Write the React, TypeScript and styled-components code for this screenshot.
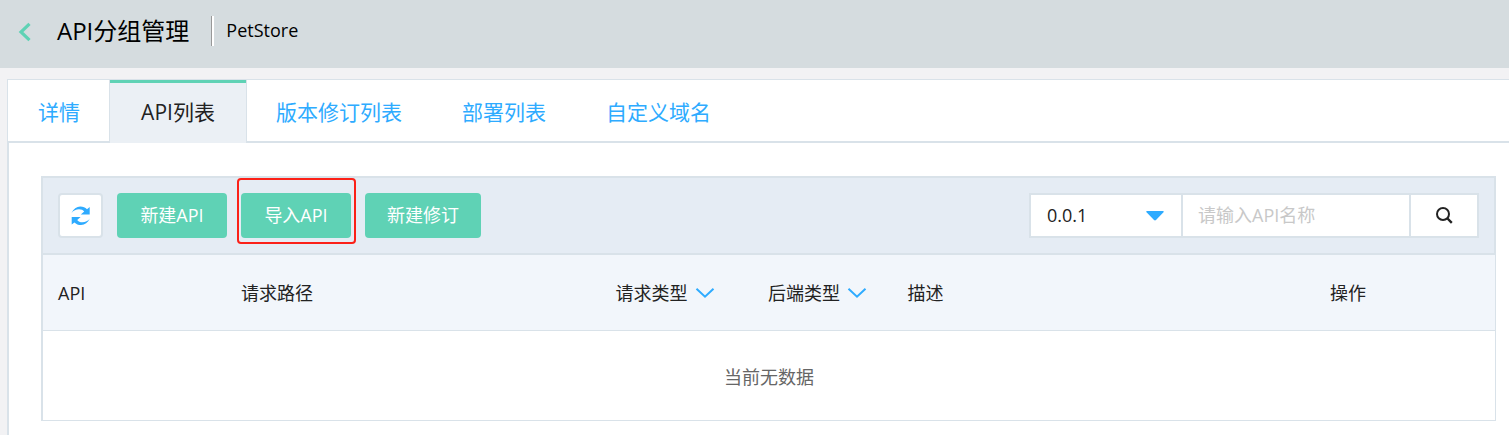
import React, { useState } from "react";
import styled, { createGlobalStyle, css } from "styled-components";

const line = "#d9e2e9";
const green = "#5fd2b5";
const blue = "#2eabff";

const GlobalStyle = createGlobalStyle`
  *, *::before, *::after { box-sizing: border-box; }
  body {
    margin: 0;
    background: #f2f2f4;
    color: #222;
    font-family: "Open Sans", "Noto Sans CJK SC", sans-serif;
    font-size: 18px;
    line-height: 24px;
  }
  button, input, select { font: inherit; color: inherit; }
`;

const Page = styled.div`
  display: flex;
  flex-direction: column;
  min-height: 100vh;
`;

const Header = styled.header`
  display: flex;
  align-items: center;
  height: 68px;
  padding: 0 18px 6px;
  background: #d5dcdf;
  color: #000;
`;

const BackLink = styled.a`
  display: flex;
  width: 39px;
  padding-top: 2px;
  color: ${green};
`;

const Title = styled.h1`
  margin: 0;
  font-size: 24px;
  font-weight: 400;
  line-height: 32px;
`;

const Subtitle = styled.span`
  display: flex;
  align-items: center;
  height: 30px;
  margin-left: 22px;
  padding: 0 0 2px 14px;
  border-left: 1px solid #999;
  box-shadow: inset 2px 0 #fff;
`;

const Main = styled.main`
  display: flex;
  flex: 1;
  flex-direction: column;
  margin: 11px 0 0 7px;
`;

const Tabs = styled.nav`
  display: flex;
  height: 64px;
  background: #fff;
  border: solid ${line};
  border-width: 1px 0 2px 1px;
`;

const Tab = styled.a<{ $active?: boolean }>`
  display: flex;
  align-items: center;
  justify-content: center;
  height: 61px;
  padding: 2px 30px 0;
  color: ${blue};
  font-size: 21px;
  text-decoration: none;
  white-space: nowrap;
  ${(p) =>
    p.$active &&
    css`
      min-width: 136px;
      height: 63px;
      padding: 0 30px 3px;
      border-top: 3px solid ${green};
      background: #ebf0f5;
      color: #222;
      box-shadow: -1px 0 ${line}, 1px 0 ${line};
    `}
`;

const Content = styled.section`
  flex: 1;
  padding: 33px 13px 14px 32px;
  background: #fff;
  border-left: 2px solid ${line};
`;

const Toolbar = styled.div`
  display: flex;
  align-items: flex-start;
  justify-content: space-between;
  padding: 15px;
  background: #e5ecf4;
  border: 2px solid ${line};
`;

const Actions = styled.div`
  display: flex;
  gap: 14px;
`;

const RefreshButton = styled.button`
  display: grid;
  place-items: center;
  width: 45px;
  height: 45px;
  padding: 0;
  background: #fff;
  border: 2px solid ${line};
  border-radius: 4px;
  color: ${blue};
`;

const ActionButton = styled.button<{ $marked?: boolean }>`
  position: relative;
  min-width: 110px;
  height: 45px;
  padding: 0 22px 2px;
  background: ${green};
  border: 0;
  border-radius: 4px;
  color: #fff;
  white-space: nowrap;
  ${(p) =>
    p.$marked &&
    css`
      &::after {
        content: "";
        position: absolute;
        inset: -15px -5px -6px -4px;
        border: 2px solid #fb2118;
        border-radius: 4px;
        pointer-events: none;
      }
    `}
`;

const Search = styled.form`
  display: flex;
  height: 45px;
  background: #fff;
  border: 2px solid ${line};
`;

const SelectBox = styled.div`
  position: relative;
  width: 150px;
  svg {
    position: absolute;
    top: 16px;
    right: 17px;
    pointer-events: none;
  }
`;

const Select = styled.select`
  appearance: none;
  width: 100%;
  height: 100%;
  padding: 0 16px 2px;
  background: transparent;
  border: 0;
`;

const SearchInput = styled.input`
  width: 228px;
  padding: 0 15px 2px;
  background: transparent;
  border: 0;
  border-left: 2px solid ${line};
  border-radius: 0;
  &::placeholder { color: #c8c8c8; opacity: 1; }
`;

const SearchButton = styled.button`
  display: grid;
  place-items: center;
  width: 68px;
  padding: 0 0 2px;
  background: transparent;
  border: 0;
  border-left: 2px solid ${line};
`;

const Table = styled.table`
  width: 100%;
  table-layout: fixed;
  border-collapse: separate;
  border-spacing: 0;
  border: solid ${line};
  border-width: 0 1px 1px 2px;
`;

const HeadCell = styled.th<{ $width?: string }>`
  width: ${(p) => p.$width ?? "auto"};
  height: 76px;
  padding: 0 15px;
  background: #f2f6fb;
  border-bottom: 1px solid ${line};
  font-weight: 400;
  text-align: left;
  white-space: nowrap;
`;

const FilterButton = styled.button`
  display: flex;
  align-items: center;
  gap: 7px;
  padding: 0;
  background: none;
  border: 0;
  svg { color: ${blue}; }
`;

const EmptyCell = styled.td`
  height: 89px;
  padding: 2px 0 0;
  color: #666;
  text-align: center;
`;

const tabs = ["详情", "API列表", "版本修订列表", "部署列表", "自定义域名"];

const columns = [
  { label: "API", width: "12.6%" },
  { label: "请求路径", width: "25.8%" },
  { label: "请求类型", width: "10.5%", filter: true },
  { label: "后端类型", width: "9.6%", filter: true },
  { label: "描述", width: "29.1%" },
  { label: "操作" },
];

const BackIcon = () => (
  <svg width="13" height="20" viewBox="0 0 13 20" fill="none" stroke="currentColor" strokeWidth="3.2" aria-hidden="true">
    <path d="M11.500 1.800 3 10l8.500 8.200" />
  </svg>
);

const RefreshIcon = () => (
  <svg width="20" height="20" viewBox="0 0 20 20" fill="currentColor" aria-hidden="true">
    <path d="M.5 7C2.500 2.800 5.600.6 9.300.6c2.800 0 4.900.9 6.700 2.600L18.700 1v7.500H9.800l3.400-2.900C12 4.100 10.400 3.300 8 3.300 5 3.300 2.500 4.500.5 7Z" />
    <path d="M18.900 12.600c-2 4.200-5.100 6.400-8.800 6.400-2.800 0-4.900-.9-6.700-2.600L.7 18.600v-7.500h8.900L6.200 14c1.200 1.500 2.800 2.300 5.200 2.300 3 0 5.500-1.200 7.500-3.700Z" />
  </svg>
);

const SearchIcon = () => (
  <svg width="18" height="18" viewBox="0 0 18 18" fill="none" stroke="currentColor" aria-hidden="true">
    <circle cx="8" cy="8" r="6" strokeWidth="2" />
    <path d="m12 12 4.800 4.800" strokeWidth="2.400" />
  </svg>
);

const CaretIcon = () => (
  <svg width="18" height="10" viewBox="0 0 18 10" fill={blue} aria-hidden="true">
    <path d="M1 0h16c.8 0 1 .8.500 1.300L10 9c-.6.600-1.400.6-2 0L.5 1.300C0 .8.200 0 1 0Z" />
  </svg>
);

const ChevronIcon = () => (
  <svg width="20" height="12" viewBox="0 0 20 12" fill="none" stroke="currentColor" strokeWidth="2" aria-hidden="true">
    <path d="m1.500 1.700 8.500 8 8.500-8" />
  </svg>
);

export default function App() {
  const [version, setVersion] = useState("0.0.1");
  const [name, setName] = useState("");

  return (
    <Page lang="zh-CN">
      <GlobalStyle />
      <Header>
        <BackLink href="#back" aria-label="返回">
          <BackIcon />
        </BackLink>
        <Title>API分组管理</Title>
        <Subtitle>PetStore</Subtitle>
      </Header>
      <Main>
        <Tabs>
          {tabs.map((tab, i) => (
            <Tab key={tab} href={`#tab-${i}`} $active={i === 1} aria-current={i === 1 ? "page" : undefined}>
              {tab}
            </Tab>
          ))}
        </Tabs>
        <Content>
          <Toolbar>
            <Actions>
              <RefreshButton type="button" aria-label="刷新">
                <RefreshIcon />
              </RefreshButton>
              <ActionButton type="button">新建API</ActionButton>
              <ActionButton type="button" $marked>导入API</ActionButton>
              <ActionButton type="button">新建修订</ActionButton>
            </Actions>
            <Search onSubmit={(e) => e.preventDefault()}>
              <SelectBox>
                <Select aria-label="版本" value={version} onChange={(e) => setVersion(e.target.value)}>
                  <option>0.0.1</option>
                </Select>
                <CaretIcon />
              </SelectBox>
              <SearchInput
                aria-label="API名称"
                placeholder="请输入API名称"
                value={name}
                onChange={(e) => setName(e.target.value)}
              />
              <SearchButton type="submit" aria-label="搜索">
                <SearchIcon />
              </SearchButton>
            </Search>
          </Toolbar>
          <Table>
            <thead>
              <tr>
                {columns.map((c) => (
                  <HeadCell key={c.label} scope="col" $width={c.width}>
                    {c.filter ? (
                      <FilterButton type="button">
                        {c.label}
                        <ChevronIcon />
                      </FilterButton>
                    ) : (
                      c.label
                    )}
                  </HeadCell>
                ))}
              </tr>
            </thead>
            <tbody>
              <tr>
                <EmptyCell colSpan={columns.length}>当前无数据</EmptyCell>
              </tr>
            </tbody>
          </Table>
        </Content>
      </Main>
    </Page>
  );
}
